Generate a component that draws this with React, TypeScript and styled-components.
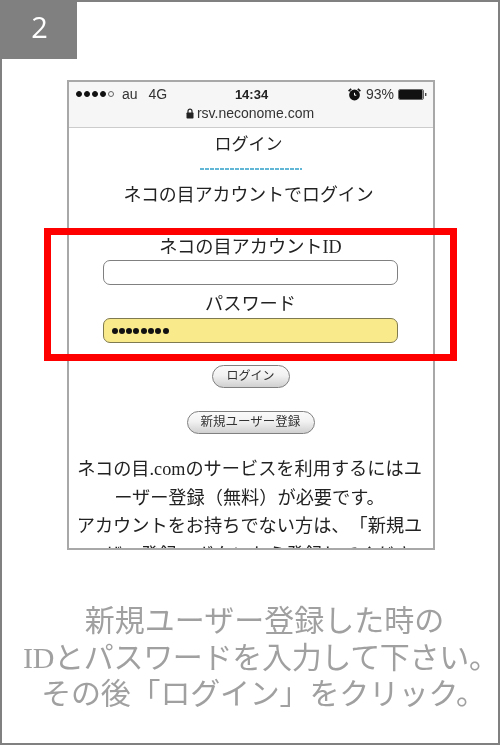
import styled, { createGlobalStyle } from 'styled-components';

const GlobalStyle = createGlobalStyle`
  html, body {
    margin: 0;
    padding: 0;
    background: #ffffff;
  }
`;

const Page = styled.div`
  width: 500px;
  height: 745px;
  box-sizing: border-box;
  border: 2px solid #808080;
  background: #ffffff;
  position: relative;
  overflow: hidden;
  font-family: 'Liberation Serif', 'Noto Sans CJK JP', sans-serif;
  text-spacing-trim: space-all;
  filter: blur(0.35px);
`;

const StepBadge = styled.div`
  width: 75px;
  height: 57px;
  background: #808080;
  color: #ffffff;
  font-family: 'Open Sans', sans-serif;
  font-size: 29px;
  line-height: 50px;
  text-align: center;
`;

const Phone = styled.div`
  width: 368px;
  height: 470px;
  box-sizing: border-box;
  margin: 21px 0 0 65px;
  border: 2px solid #a8a8a8;
  overflow: hidden;
`;

const BrowserBar = styled.div`
  height: 46px;
  box-sizing: border-box;
  padding: 0 6px 0 7px;
  background: #f6f6f6;
  border-bottom: 1px solid #cccccc;
  font-family: 'Liberation Sans', sans-serif;
  color: #222222;
`;

const StatusRow = styled.div`
  height: 22px;
  padding-top: 1px;
  display: grid;
  grid-template-columns: 1fr auto 1fr;
  align-items: center;
  font-size: 14px;
`;

const StatusLeft = styled.div`
  display: flex;
  align-items: center;
`;

const StatusRight = styled.div`
  display: flex;
  align-items: center;
  justify-content: flex-end;
`;

const Signal = styled.div`
  display: flex;
  gap: 2px;
  margin-right: 8px;
`;

const SignalDot = styled.span<{ $empty?: boolean }>`
  width: 6px;
  height: 6px;
  box-sizing: border-box;
  border-radius: 50%;
  background: ${(p) => (p.$empty ? 'transparent' : '#111111')};
  border: 1px solid ${(p) => (p.$empty ? '#666666' : '#111111')};
`;

const Carrier = styled.span<{ $gap?: number }>`
  margin-right: ${(p) => p.$gap ?? 0}px;
  color: #333333;
`;

const Clock = styled.span`
  font-weight: 700;
  font-size: 13px;
  color: #222222;
`;

const Percent = styled.span`
  margin: 0 4px 0 5px;
  font-size: 14px;
  color: #333333;
`;

const UrlRow = styled.div`
  display: flex;
  align-items: center;
  justify-content: center;
  gap: 3px;
  padding-right: 3px;
  font-size: 14px;
  line-height: 16px;
  color: #333333;
`;

const Content = styled.div`
  padding-right: 1px;
  text-align: center;
  color: #222222;
  font-size: 18.2px;
`;

const Title = styled.div`
  font-size: 17px;
  line-height: 24px;
  margin-top: 5px;
  padding-right: 4px;
`;

const Dashes = styled.div`
  width: 102px;
  height: 2px;
  margin: 11px auto 0;
  background: repeating-linear-gradient(90deg, #62b6d6 0 4px, #ffffff 4px 5px);
`;

const Heading = styled.div`
  font-size: 17.9px;
  line-height: 26px;
  margin-top: 12px;
  padding-right: 4px;
`;

const LoginForm = styled.div`
  margin-top: 25px;
  display: flex;
  flex-direction: column;
  align-items: center;
`;

const FieldLabel = styled.label`
  padding-top: 1px;
  line-height: 26px;
`;

const Field = styled.div<{ $filled?: boolean }>`
  width: 295px;
  height: 25px;
  box-sizing: border-box;
  margin: ${(p) => (p.$filled ? '1px' : '0')} 0 ${(p) => (p.$filled ? '0' : '5px')};
  padding-left: 7.5px;
  display: flex;
  align-items: center;
  gap: 1.3px;
  background: ${(p) => (p.$filled ? '#f9ea8c' : '#ffffff')};
  border: 1.5px solid ${(p) => (p.$filled ? '#807a50' : '#808080')};
  border-radius: 7px;
`;

const PasswordDot = styled.span`
  width: 6px;
  height: 6px;
  border-radius: 50%;
  background: #111111;
`;

const PillButton = styled.div<{ $width: number; $top: number; $size: number }>`
  width: ${(p) => p.$width}px;
  height: 23px;
  box-sizing: border-box;
  margin: ${(p) => p.$top}px auto 0;
  background: linear-gradient(#fafafa, #f2f2f2 45%, #d0d0d0);
  border: 1.5px solid #808080;
  border-radius: 12px;
  font-size: ${(p) => p.$size}px;
  line-height: 20px;
  color: #333333;
`;

const Notice = styled.div`
  margin-top: 21px;
  padding: 0 9px 0 7px;
  line-height: 28.6px;
  color: #222222;
`;

const Caption = styled.div`
  margin-top: 53px;
  padding-left: 13px;
  text-align: center;
  color: #a0a0a0;
  font-size: 30px;
  line-height: 36.5px;
  white-space: nowrap;
`;

const CaptionLine = styled.div<{ $indent?: number; $spacing?: number }>`
  padding-left: ${(p) => p.$indent ?? 0}px;
  letter-spacing: ${(p) => p.$spacing ?? 0}px;
`;

const Highlight = styled.div`
  position: absolute;
  left: 42px;
  top: 226px;
  width: 413px;
  height: 133px;
  box-sizing: border-box;
  border: 7px solid #ff0000;
`;

function LockIcon() {
  return (
    <svg width="8" height="11" viewBox="0 0 8 11">
      <path d="M2 5V3.2a2 2 0 0 1 4 0V5" fill="none" stroke="#222" strokeWidth="1.2" />
      <rect x="0.5" y="4.5" width="7" height="6" rx="0.8" fill="#222" />
    </svg>
  );
}

function AlarmIcon() {
  return (
    <svg width="13" height="13" viewBox="0 0 13 13">
      <circle cx="6.5" cy="7" r="5.4" fill="#111" />
      <path d="M6.5 4.8v2.4h1.8" fill="none" stroke="#fff" strokeWidth="1" />
      <path d="M0.6 3.2L3.2 0.8M12.4 3.2L9.8 0.8" stroke="#111" strokeWidth="1.6" />
    </svg>
  );
}

function BatteryIcon() {
  return (
    <svg width="29" height="11" viewBox="0 0 29 11">
      <rect x="0.5" y="0.5" width="25" height="10" rx="1.5" fill="#fff" stroke="#666" />
      <rect x="1" y="1" width="23.5" height="9" rx="1" fill="#111" />
      <rect x="27" y="4" width="1.4" height="3" fill="#444" />
    </svg>
  );
}

export default function App() {
  return (
    <>
      <GlobalStyle />
      <Page>
        <StepBadge>2</StepBadge>
        <Phone>
          <BrowserBar>
            <StatusRow>
              <StatusLeft>
                <Signal>
                  <SignalDot />
                  <SignalDot />
                  <SignalDot />
                  <SignalDot />
                  <SignalDot $empty />
                </Signal>
                <Carrier $gap={11}>au</Carrier>
                <Carrier>4G</Carrier>
              </StatusLeft>
              <Clock>14:34</Clock>
              <StatusRight>
                <AlarmIcon />
                <Percent>93%</Percent>
                <BatteryIcon />
              </StatusRight>
            </StatusRow>
            <UrlRow>
              <LockIcon />
              rsv.neconome.com
            </UrlRow>
          </BrowserBar>
          <Content>
            <Title>ログイン</Title>
            <Dashes />
            <Heading>ネコの目アカウントでログイン</Heading>
            <LoginForm>
              <FieldLabel>ネコの目アカウントID</FieldLabel>
              <Field />
              <FieldLabel>パスワード</FieldLabel>
              <Field $filled>
                <PasswordDot />
                <PasswordDot />
                <PasswordDot />
                <PasswordDot />
                <PasswordDot />
                <PasswordDot />
                <PasswordDot />
                <PasswordDot />
              </Field>
            </LoginForm>
            <PillButton $width={78} $top={22} $size={12}>ログイン</PillButton>
            <PillButton $width={128} $top={23} $size={12.5}>新規ユーザー登録</PillButton>
            <Notice>
              ネコの目.comのサービスを利用するにはユーザー登録（無料）が必要です。
              <br />
              アカウントをお持ちでない方は、「新規ユーザー登録」ボタンから登録してください。
            </Notice>
          </Content>
        </Phone>
        <Caption>
          <CaptionLine $indent={16}>新規ユーザー登録した時の</CaptionLine>
          <CaptionLine $indent={8} $spacing={-0.3}>IDとパスワードを入力して下さい。</CaptionLine>
          <CaptionLine $indent={14} $spacing={-0.2}>その後「ログイン」をクリック。</CaptionLine>
        </Caption>
        <Highlight />
      </Page>
    </>
  );
}
